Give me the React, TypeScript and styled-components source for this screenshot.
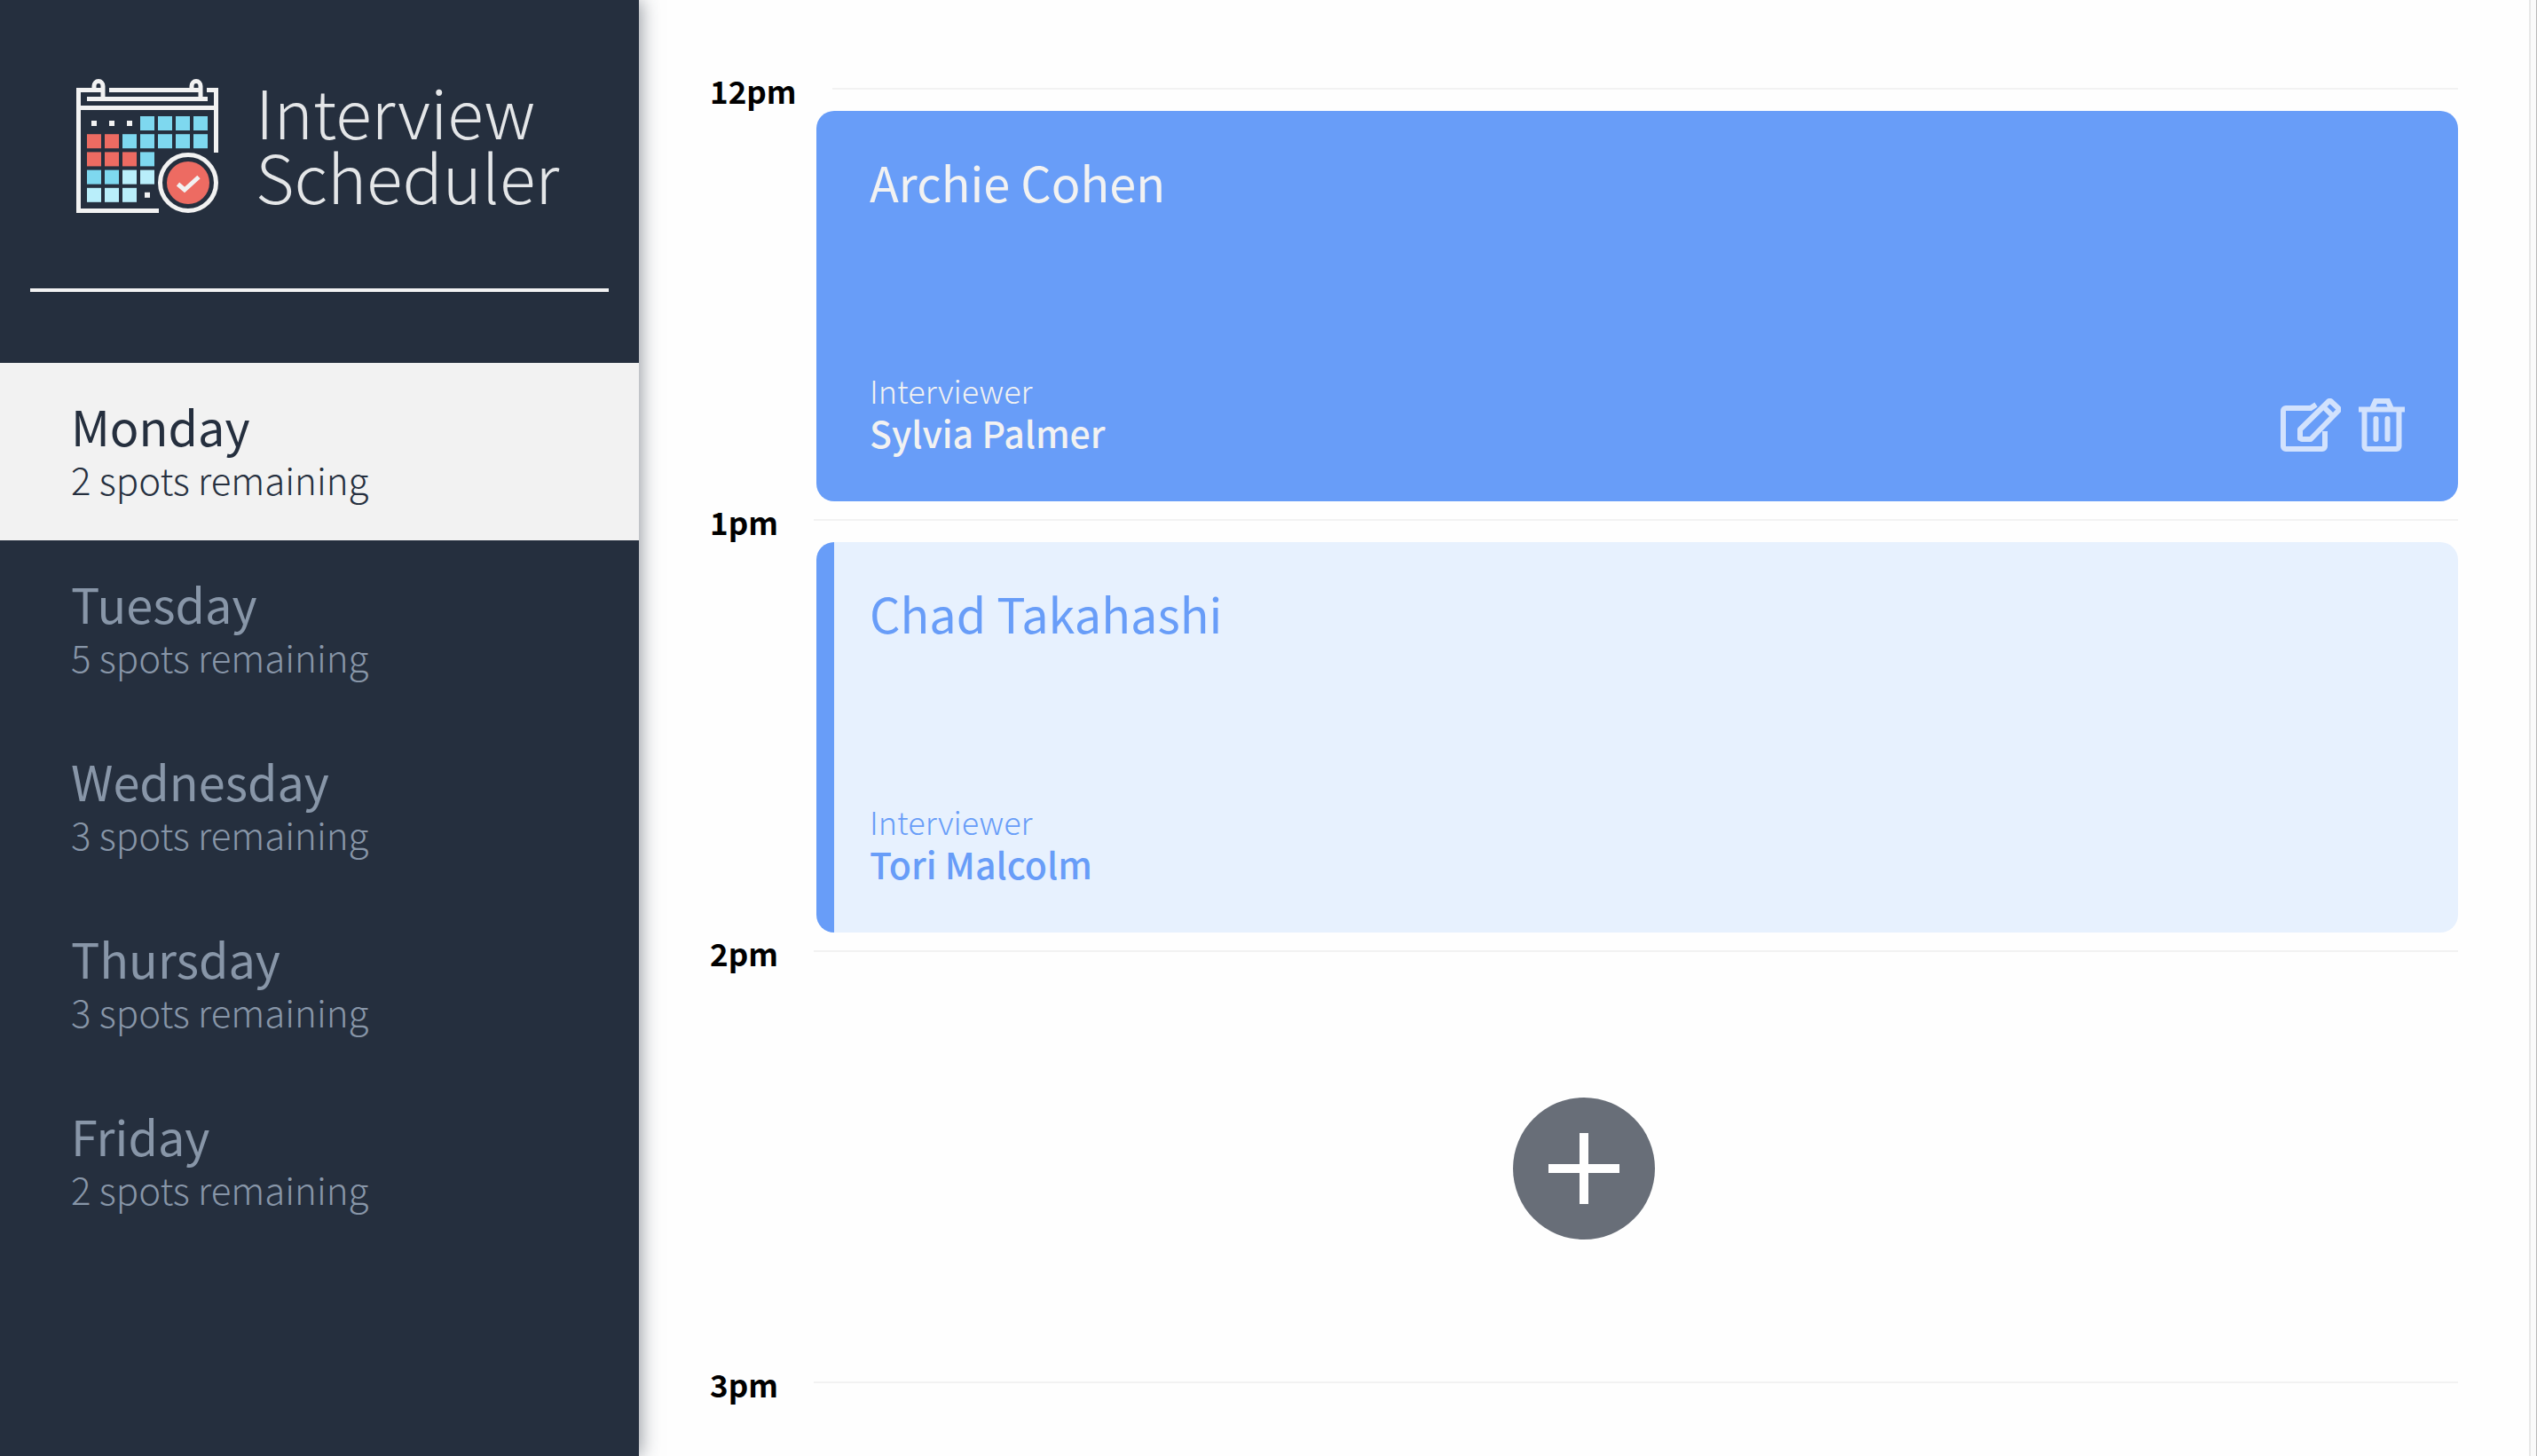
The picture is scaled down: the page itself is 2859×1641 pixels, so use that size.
import React from 'react';
import styled, { createGlobalStyle, css } from 'styled-components';

const GlobalStyle = createGlobalStyle`
  *, *::before, *::after { box-sizing: border-box; }
  body {
    margin: 0;
    background: #fefefe;
    color: #000;
    font-family: "Noto Sans CJK JP", "Noto Sans CJK SC", "Open Sans", sans-serif;
    font-kerning: normal;
  }
  button { font: inherit; border: 0; padding: 0; background: none; cursor: pointer; }
  h1, h2, h3, h4, p, ul { margin: 0; padding: 0; font-weight: inherit; }
`;

const Layout = styled.div`
  display: flex;
  height: 100vh;
  overflow: hidden;
`;

const Sidebar = styled.aside`
  display: flex;
  flex-direction: column;
  flex: 0 0 720px;
  z-index: 1;
  background: #252f3e;
  box-shadow: 2px 0 20px rgba(37, 47, 62, 0.5);
`;

const Brand = styled.div`
  display: flex;
  gap: 42px;
  padding: 88px 40px 0 86px;
  height: 325px;
`;

const BrandName = styled.h1`
  color: #e4e6e8;
  font-size: 75px;
  font-weight: 300;
  line-height: 73px;
`;

const Divider = styled.hr`
  align-self: stretch;
  height: 4px;
  margin: 0 34px 80px;
  border: 0;
  background: #f2f2f2;
`;

const DayList = styled.ul`
  list-style: none;
`;

const DayButton = styled.button<{ $selected?: boolean }>`
  display: flex;
  flex-direction: column;
  justify-content: center;
  width: 100%;
  height: 200px;
  padding: 2px 80px 0;
  text-align: left;
  color: #8896a8;
  ${(p) => p.$selected && css`
    background: #f2f2f2;
    color: #252f3e;
  `}
`;

const DayName = styled.span`
  font-size: 54px;
  font-weight: 400;
  line-height: 60px;
`;

const DaySpots = styled.span`
  font-size: 42px;
  font-weight: 300;
  line-height: 60px;
`;

const Schedule = styled.main`
  flex: 1;
  min-width: 0;
  overflow: hidden;
  padding: 79px 80px 0;
`;

const SlotHeader = styled.header`
  display: flex;
  align-items: flex-start;
  gap: 40px;
  height: 46px;
`;

const SlotTime = styled.h4`
  font-size: 35px;
  font-weight: 700;
  line-height: 46px;
`;

const SlotLine = styled.div`
  flex: 1;
  height: 2px;
  margin-top: 20px;
  background: #f2f2f2;
`;

const Card = styled.article<{ $active?: boolean }>`
  display: flex;
  flex-direction: column;
  justify-content: space-between;
  height: 440px;
  margin-left: 120px;
  padding: 46px 60px 54px;
  border-radius: 20px;
  ${(p) => p.$active
    ? css`
        background: #689df8;
        color: #f2f2f2;
      `
    : css`
        padding-left: 40px;
        border-left: 20px solid #689df8;
        background: #e7f1fe;
        color: #689df8;
      `}
`;

const Student = styled.h2`
  font-size: 54px;
  font-weight: 400;
  line-height: 68px;
`;

const CardFooter = styled.div`
  display: flex;
  justify-content: space-between;
  align-items: flex-end;
`;

const InterviewerLabel = styled.h4`
  font-size: 36px;
  font-weight: 300;
  line-height: 48px;
`;

const InterviewerName = styled.h3`
  font-size: 41px;
  font-weight: 500;
  line-height: 48px;
`;

const Actions = styled.div`
  display: flex;
  gap: 20px;
  padding-bottom: 2px;
  color: #d2e2fd;
`;

const IconButton = styled.button`
  display: flex;
  color: inherit;
`;

const EmptySlot = styled.div`
  display: flex;
  align-items: center;
  justify-content: center;
  height: 440px;
`;

const AddButton = styled.button`
  display: flex;
  align-items: center;
  justify-content: center;
  width: 160px;
  height: 160px;
  border-radius: 50%;
  background: #686e78;
`;

const ScrollGutter = styled.div`
  flex: 0 0 9px;
  border-left: 2px solid #e8e8e8;
  border-right: 1px solid #b8b8b8;
  background: #fafafa;
`;

const RED = '#ed6b62';
const BLUE = '#7ed8ef';
const PALE = '#b9eefa';

const CELLS: (string | null)[][] = [
  [null, null, null, BLUE, BLUE, BLUE, BLUE],
  [RED, RED, BLUE, BLUE, BLUE, BLUE, BLUE],
  [RED, RED, RED, BLUE],
  [BLUE, BLUE, PALE, PALE],
  [PALE, PALE, PALE, null],
];

const CalendarLogo = () => (
  <svg width="160" height="152" viewBox="0 0 160 152" fill="none" aria-hidden="true">
    <g stroke="#f2f2f2" strokeWidth="5">
      <path d="M28 13.500H2.500V149.500H93M37 13.500H139M147 13.500H157.500V84" />
      <path d="M12 23.500H148M2.500 33.500H157.500" />
      <path d="M20 13V9a5 5.500 0 0 1 10 0V23M130 13V9a5 5.500 0 0 1 10 0V23" />
    </g>
    {CELLS.map((row, y) =>
      row.map((fill, x) =>
        fill ? (
          <rect key={`${x}-${y}`} x={12 + x * 20} y={43 + y * 20.200} width="16" height="16" fill={fill} />
        ) : (
          <rect key={`${x}-${y}`} x={17 + x * 20} y={48 + y * 20.200} width="6" height="6" fill="#f2f2f2" />
        ),
      ),
    )}
    <circle cx="126" cy="118" r="31.500" stroke="#f2f2f2" strokeWidth="5" />
    <circle cx="126" cy="118" r="24" fill={RED} />
    <path d="M114.500 119.500L122 126L138 111.500" stroke="#f2f2f2" strokeWidth="5" />
  </svg>
);

const EditIcon = () => (
  <svg width="68" height="60" viewBox="0 0 68 60" fill="none" stroke="currentColor" strokeWidth="6" strokeLinejoin="round">
    <path d="M40 7L34 11H6a3 3 0 0 0 -3 3V54a3 3 0 0 0 3 3H47a3 3 0 0 0 3 -3V37" />
    <path d="M22 45V35L54 3.500a2 2 0 0 1 3 0L65 11a2 2 0 0 1 0 3L34 46H24a2 2 0 0 1 -2 -2ZM48 9L59 20" />
  </svg>
);

const TrashIcon = () => (
  <svg width="52" height="60" viewBox="0 0 52 60" fill="none" stroke="currentColor" strokeWidth="6">
    <path d="M0 12.500H52M15 12L19 3H33L37 12" />
    <path d="M6.500 12.500V54a3 3 0 0 0 3 3H42.500a3 3 0 0 0 3 -3V12.500" />
    <path d="M19.500 23V46M32.500 23V46" strokeLinecap="round" />
  </svg>
);

const PlusIcon = () => (
  <svg width="80" height="80" viewBox="0 0 80 80" stroke="#fff" strokeWidth="10">
    <path d="M0 40H80M40 0V80" />
  </svg>
);

const DAYS = [
  { name: 'Monday', spots: 2 },
  { name: 'Tuesday', spots: 5 },
  { name: 'Wednesday', spots: 3 },
  { name: 'Thursday', spots: 3 },
  { name: 'Friday', spots: 2 },
];

const Slot = ({ time, children }: { time: string; children?: React.ReactNode }) => (
  <section>
    <SlotHeader>
      <SlotTime>{time}</SlotTime>
      <SlotLine />
    </SlotHeader>
    {children}
  </section>
);

const Appointment = ({ student, interviewer, active }: { student: string; interviewer: string; active?: boolean }) => (
  <Card $active={active}>
    <Student>{student}</Student>
    <CardFooter>
      <div>
        <InterviewerLabel>Interviewer</InterviewerLabel>
        <InterviewerName>{interviewer}</InterviewerName>
      </div>
      {active && (
        <Actions>
          <IconButton type="button" aria-label="Edit"><EditIcon /></IconButton>
          <IconButton type="button" aria-label="Delete"><TrashIcon /></IconButton>
        </Actions>
      )}
    </CardFooter>
  </Card>
);

export default function App() {
  const [day, setDay] = React.useState('Monday');
  return (
    <>
      <GlobalStyle />
      <Layout>
        <Sidebar>
          <Brand>
            <CalendarLogo />
            <BrandName>Interview<br />Scheduler</BrandName>
          </Brand>
          <Divider />
          <nav aria-label="Days">
            <DayList>
              {DAYS.map(({ name, spots }) => (
                <li key={name}>
                  <DayButton type="button" $selected={name === day} onClick={() => setDay(name)}>
                    <DayName>{name}</DayName>
                    <DaySpots>{spots} spots remaining</DaySpots>
                  </DayButton>
                </li>
              ))}
            </DayList>
          </nav>
        </Sidebar>
        <Schedule>
          <Slot time="12pm">
            <Appointment student="Archie Cohen" interviewer="Sylvia Palmer" active />
          </Slot>
          <Slot time="1pm">
            <Appointment student="Chad Takahashi" interviewer="Tori Malcolm" />
          </Slot>
          <Slot time="2pm">
            <EmptySlot>
              <AddButton type="button" aria-label="Add"><PlusIcon /></AddButton>
            </EmptySlot>
          </Slot>
          <Slot time="3pm" />
        </Schedule>
        <ScrollGutter />
      </Layout>
    </>
  );
}
